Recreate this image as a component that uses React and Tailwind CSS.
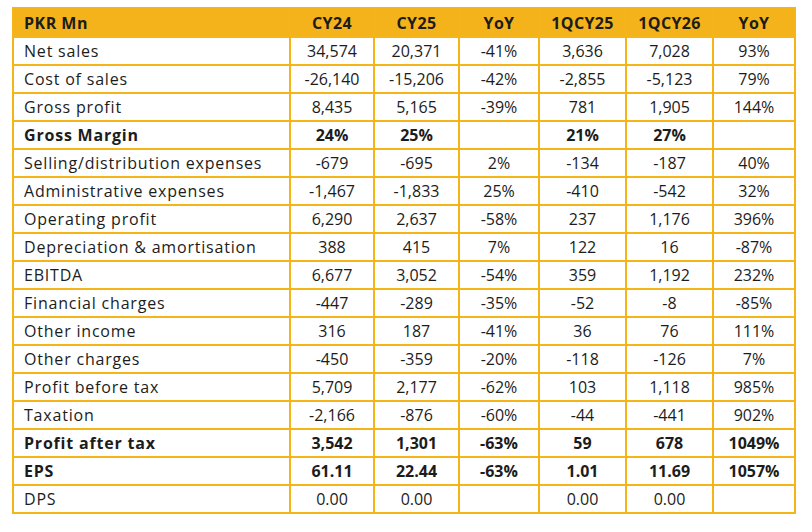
import React from 'react';

const rows = [
  ['Net sales', '34,574', '20,371', '-41%', '3,636', '7,028', '93%'],
  ['Cost of sales', '-26,140', '-15,206', '-42%', '-2,855', '-5,123', '79%'],
  ['Gross profit', '8,435', '5,165', '-39%', '781', '1,905', '144%'],
  ['Gross Margin', '24%', '25%', '', '21%', '27%', '', true],
  ['Selling/distribution expenses', '-679', '-695', '2%', '-134', '-187', '40%'],
  ['Administrative expenses', '-1,467', '-1,833', '25%', '-410', '-542', '32%'],
  ['Operating profit', '6,290', '2,637', '-58%', '237', '1,176', '396%'],
  ['Depreciation & amortisation', '388', '415', '7%', '122', '16', '-87%'],
  ['EBITDA', '6,677', '3,052', '-54%', '359', '1,192', '232%'],
  ['Financial charges', '-447', '-289', '-35%', '-52', '-8', '-85%'],
  ['Other income', '316', '187', '-41%', '36', '76', '111%'],
  ['Other charges', '-450', '-359', '-20%', '-118', '-126', '7%'],
  ['Profit before tax', '5,709', '2,177', '-62%', '103', '1,118', '985%'],
  ['Taxation', '-2,166', '-876', '-60%', '-44', '-441', '902%'],
  ['Profit after tax', '3,542', '1,301', '-63%', '59', '678', '1049%', true],
  ['EPS', '61.11', '22.44', '-63%', '1.01', '11.69', '1057%', true],
  ['DPS', '0.00', '0.00', '', '0.00', '0.00', ''],
];

const headers = ['CY24', 'CY25', 'YoY', '1QCY25', '1QCY26', 'YoY'];

export default function App() {
  return (
    <div className="w-[812px] h-[532px] bg-white pl-[12px] pt-[7px]" style={{ fontFamily: '"Open Sans", "Liberation Sans", sans-serif' }}>
      <table className="table-fixed border-collapse text-[16px] text-[#1c1c1c]" style={{ width: 782 }}>
        <colgroup>
          <col className="w-[277px]" />
          <col className="w-[84px]" />
          <col className="w-[85px]" />
          <col className="w-[80px]" />
          <col className="w-[87px]" />
          <col className="w-[87px]" />
          <col className="w-[82px]" />
        </colgroup>
        <thead>
          <tr className="bg-[#f4b31a] h-[29px]">
            <th className="border-2 border-[#f5b418] text-left pl-[10px] font-bold leading-none tracking-[0.03em]">PKR Mn</th>
            {headers.map((h, i) => (
              <th key={i} className="border-2 border-[#f5b418] text-center font-bold leading-none tracking-[0.02em]">{h}</th>
            ))}
          </tr>
        </thead>
        <tbody>
          {rows.map((r, i) => {
            const bold = r[7];
            return (
              <tr key={i} className={`h-[28px] ${bold ? 'font-bold' : ''}`}>
                <td className="border-2 border-[#f5b418] pl-[10px] leading-none whitespace-nowrap tracking-[0.05em]">{r[0]}</td>
                {r.slice(1, 7).map((c, j) => (
                  <td key={j} className="border-2 border-[#f5b418] text-center leading-none">{c}</td>
                ))}
              </tr>
            );
          })}
        </tbody>
      </table>
    </div>
  );
}
